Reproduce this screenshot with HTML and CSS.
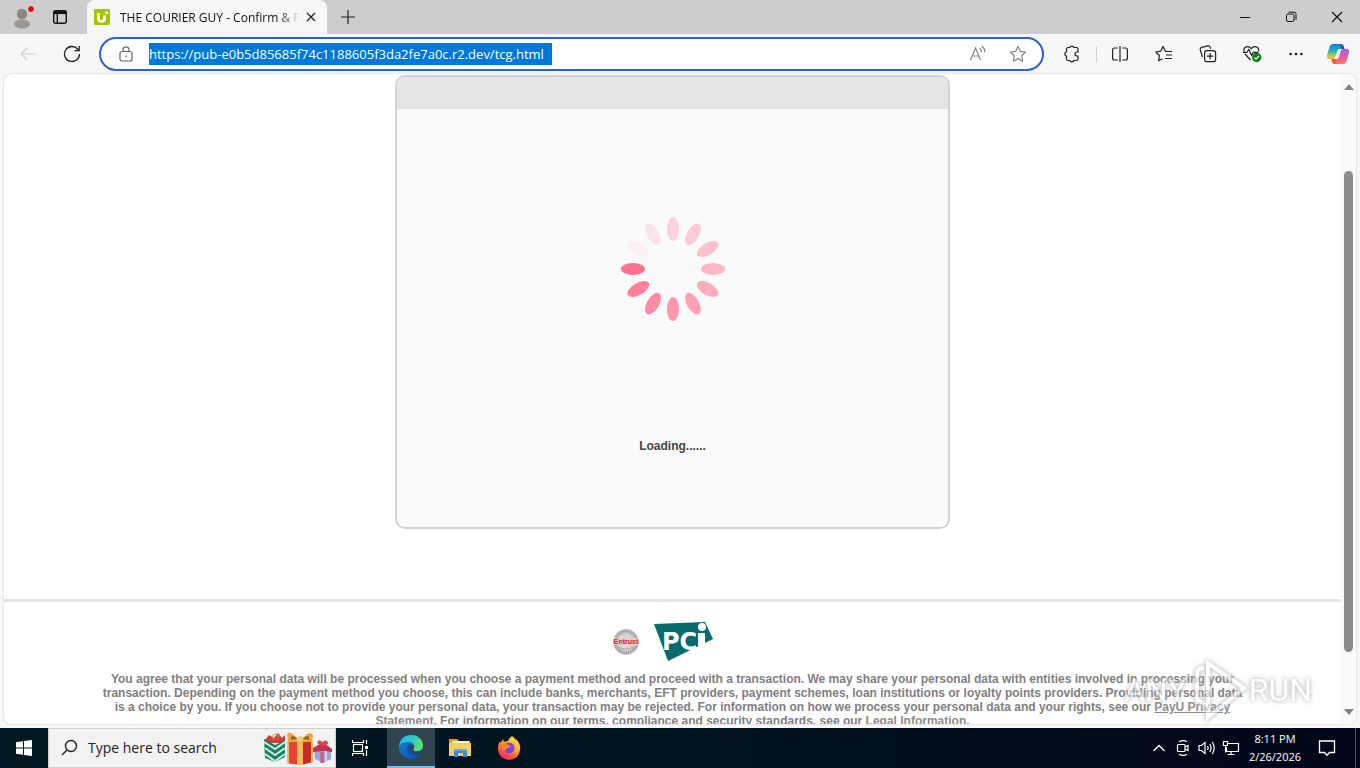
FILE: index.html
```html
<!DOCTYPE html>
<html lang="en">
<head>
<meta charset="utf-8">
<title>THE COURIER GUY - Confirm &amp; Pay</title>
<link rel="stylesheet" href="styles.css">
</head>
<body>
<div class="desktop">
  <header class="tabstrip">
    <button class="profile" aria-label="Profile">
      <svg width="24" height="24" viewBox="0 0 24 24"><circle cx="11" cy="9" r="5.200" fill="#8a8684"/><ellipse cx="11" cy="19" rx="8" ry="4.500" fill="#9a9694"/><circle cx="20" cy="4" r="3.500" fill="#d80c1c" stroke="#e6e6e6"/></svg>
    </button>
    <button class="tab-actions" aria-label="Tab actions">
      <svg width="16" height="16" viewBox="0 0 16 16" fill="none" stroke="#111" stroke-width="1.4"><rect x="1.700" y="1.700" width="12.600" height="12.600" rx="2"/><path d="M1.700 3.600h12.600" stroke-width="3"/><path d="M5.300 5v9"/></svg>
    </button>
    <div class="tab">
      <svg class="favicon" width="16" height="16" viewBox="0 0 16 16"><rect width="16" height="16" rx="1" fill="#a6c307"/><path d="M4.500 4v5.500q0 3 3 3t3-3V6.500" fill="none" stroke="#fff" stroke-width="2.700"/><path d="M11.500 2.500h2.500v2.500h-2.500z" fill="#fff"/></svg>
      <span class="tab-title">THE COURIER GUY - Confirm &amp; Pay</span>
      <button class="tab-close" aria-label="Close tab"><svg width="10" height="10" viewBox="0 0 10 10" stroke="#222" stroke-width="1.300"><path d="M1 1l8 8M9 1l-8 8"/></svg></button>
    </div>
    <button class="new-tab" aria-label="New tab"><svg width="14" height="14" viewBox="0 0 14 14" stroke="#222" stroke-width="1.200"><path d="M7 0v14M0 7h14"/></svg></button>
    <div class="window-controls">
      <button aria-label="Minimize"><svg width="12" height="12" viewBox="0 0 12 12" stroke="#111"><path d="M1 6.500h10"/></svg></button>
      <button aria-label="Restore"><svg width="12" height="12" viewBox="0 0 12 12" stroke="#111" fill="none"><rect x="1.500" y="3" width="7.500" height="7.500" rx="1.500"/><path d="M3.500 1.200h5.500q2 0 2 2v5.500"/></svg></button>
      <button aria-label="Close"><svg width="12" height="12" viewBox="0 0 12 12" stroke="#111" stroke-width="1.200"><path d="M1 1l10 10M11 1L1 11"/></svg></button>
    </div>
  </header>

  <nav class="toolbar">
    <button class="tool back" aria-label="Back"><svg width="18" height="18" viewBox="0 0 18 18" fill="none" stroke="#cfcfcf" stroke-width="1.200"><path d="M17 9H2M8.500 2.500L2 9l6.500 6.500"/></svg></button>
    <button class="tool" aria-label="Refresh"><svg width="18" height="18" viewBox="0 0 18 18" fill="none" stroke="#222" stroke-width="1.300"><path d="M16.500 9A7.500 7.500 0 1 1 14.600 4L16 5.500M16.200 1v4.700h-4.700"/></svg></button>
    <div class="address">
      <svg class="lock" width="14" height="16" viewBox="0 0 14 16" fill="none" stroke="#666" stroke-width="1.200"><rect x="1" y="5.500" width="12" height="9.500" rx="2"/><path d="M4 5.500V3.800a3 3 0 0 1 6 0v1.700"/><circle cx="7" cy="10.300" r=".8" fill="#555" stroke="none"/></svg>
      <input class="url" type="text" aria-label="Address" value="https://pub-e0b5d85685f74c1188605f3da2fe7a0c.r2.dev/tcg.html" spellcheck="false">
      <span class="spacer"></span>
      <button class="tool" aria-label="Read aloud"><svg width="18" height="18" viewBox="0 0 18 18" fill="none" stroke="#858585" stroke-width="1.200"><path d="M1.500 15L6.500 3l5 12M3.300 11h6.400M10.500 3q2 1.500 2 4M12.800 1.200q3.200 2.200 3.200 6"/></svg></button>
      <button class="tool" aria-label="Add to favorites"><svg width="18" height="18" viewBox="0 0 18 18" fill="none" stroke="#858585" stroke-width="1.200" stroke-linejoin="round"><path d="M9 1.500l2.300 4.900 5.300.7-3.900 3.700 1 5.400L9 13.600l-4.700 2.600 1-5.400L1.400 7.100l5.300-.7z"/></svg></button>
    </div>
    <button class="tool extensions" aria-label="Extensions"><svg width="18" height="18" viewBox="0 0 18 18" fill="none" stroke="#222" stroke-width="1.200" stroke-linejoin="round"><path d="M5 2.500h1.800a2.100 2.100 0 0 1 4 0h2.700q1.500 0 1.500 1.500v3h-1a2 2 0 0 0 0 4h1v3q0 1.500-1.500 1.500h-2.700a2.100 2.100 0 0 1-4 0H5q-1.500 0-1.500-1.500V11.200a2.200 2.200 0 0 1 0-4.300V4q0-1.500 1.500-1.500z"/></svg></button>
    <span class="divider"></span>
    <button class="tool wide" aria-label="Split screen"><svg width="18" height="18" viewBox="0 0 18 18" fill="none" stroke="#222" stroke-width="1.200"><path d="M9 1v16M6.800 3H3.500Q1.600 3 1.600 5v8q0 2 1.900 2h3.300M11.200 3h3.300q1.900 0 1.900 2v8q0 2-1.900 2h-3.300"/></svg></button>
    <button class="tool wide" aria-label="Favorites"><svg width="18" height="18" viewBox="0 0 18 18" fill="none" stroke="#222" stroke-width="1.200" stroke-linejoin="round"><path d="M17 6.500h-6.500L8 1.500 5.700 6.200.8 7l3.600 3.500-.8 5.300 3.900-2.100M11 10h6M10 13.500h7"/></svg></button>
    <button class="tool wide" aria-label="Collections"><svg width="18" height="18" viewBox="0 0 18 18" fill="none" stroke="#222" stroke-width="1.200"><rect x="5.600" y="5.600" width="11" height="11" rx="2.200"/><path d="M11.100 8v6.200M8 11.100h6.200M3.500 12L1.300 5q-.5-2 1.300-2.600l6.200-1.500q2-.4 2.500 1.500l.4 1.300"/></svg></button>
    <button class="tool wide" aria-label="Browser essentials"><svg width="20" height="18" viewBox="0 0 20 18" fill="none" stroke="#222" stroke-width="1.200" stroke-linejoin="round"><path d="M3 9L8.500 15M2 6.500C1 1.500 6.500 0 9.200 3.700 12 0 17.500 1.500 16.500 6.500M1 7.300h4l1.800-3 2.800 6.300 1.700-3.300h5"/><circle cx="14.700" cy="12.500" r="4.700" fill="#118018" stroke="none"/><path d="M12.500 12.600l1.500 1.500 3-3.200" stroke="#fff"/></svg></button>
    <button class="tool wide" aria-label="Settings and more"><svg width="16" height="16" viewBox="0 0 16 16" fill="#222"><circle cx="2.500" cy="8" r="1.300"/><circle cx="8" cy="8" r="1.300"/><circle cx="13.500" cy="8" r="1.300"/></svg></button>
    <button class="tool copilot" aria-label="Copilot"><svg width="24" height="22" viewBox="0 0 24 22"><defs><linearGradient id="cpA" x1="0" y1="0" x2="0" y2="1"><stop offset="0" stop-color="#137de2"/><stop offset=".5" stop-color="#27b6b0"/><stop offset=".8" stop-color="#c6cf3c"/><stop offset="1" stop-color="#f6b52b"/></linearGradient><linearGradient id="cpB" x1="0" y1="0" x2="0" y2="1"><stop offset="0" stop-color="#9866e8"/><stop offset=".5" stop-color="#e05ba8"/><stop offset="1" stop-color="#fa7b52"/></linearGradient></defs><path d="M7 1h8q2 0 2.700 2l.8 3H14q-2 0-2.600 2l-2 6q-.7 2-2.700 2H3.500Q0 16 1 12L3.500 4Q4.500 1 7 1z" fill="url(#cpA)"/><path d="M14.500 1q3 0 4 5H15z" fill="#2256ca"/><path d="M17 21H9q-2 0-2.700-2l-.8-3H10q2 0 2.600-2l2-6q.7-2 2.700-2h3.200q3.500 0 2.500 4l-2.500 8q-1 3-3.500 3z" fill="url(#cpB)"/><path d="M5.500 16H10q-1 5 0 5H9q-3 0-3.500-5z" fill="#f05c37"/><path d="M10.400 11l1.500-4q.3-1 1.500-1h2l-2 6q-.7 4-3 4H8q1-1 1.400-2z" fill="#f5f5f7"/></svg></button>
  </nav>

  <div class="pane">
    <main class="page">
      <section class="card">
        <div class="card-head"></div>
        <div class="card-body">
          <svg class="spinner" width="104" height="104" viewBox="-52 -52 104 104" fill="#ff7190">
            <ellipse cx="0" cy="-40" rx="6" ry="12" fill="#fbd5de"/>
            <ellipse cx="0" cy="-40" rx="6" ry="12" fill="#fccbd7" transform="rotate(30)"/>
            <ellipse cx="0" cy="-40" rx="6" ry="12" fill="#fcc1ce" transform="rotate(60)"/>
            <ellipse cx="0" cy="-40" rx="6" ry="12" fill="#fdb7c6" transform="rotate(90)"/>
            <ellipse cx="0" cy="-40" rx="6" ry="12" fill="#fdacbe" transform="rotate(120)"/>
            <ellipse cx="0" cy="-40" rx="6" ry="12" fill="#fea1b6" transform="rotate(150)"/>
            <ellipse cx="0" cy="-40" rx="6" ry="12" fill="#fe96ad" transform="rotate(180)"/>
            <ellipse cx="0" cy="-40" rx="6" ry="12" fill="#fe8ba4" transform="rotate(210)"/>
            <ellipse cx="0" cy="-40" rx="6" ry="12" fill="#ff809b" transform="rotate(240)"/>
            <ellipse cx="0" cy="-40" rx="6" ry="12" fill="#ff7190" transform="rotate(270)"/>
            <ellipse cx="0" cy="-40" rx="6" ry="12" fill="#faf0f3" transform="rotate(300)"/>
            <ellipse cx="0" cy="-40" rx="6" ry="12" fill="#fbe3e9" transform="rotate(330)"/>
          </svg>
          <p class="loading">Loading......</p>
        </div>
      </section>
      <footer class="legal">
        <div class="badges">
          <svg width="28" height="28" viewBox="0 0 28 28"><defs><radialGradient id="seal"><stop offset="0" stop-color="#e4e4e4"/><stop offset=".65" stop-color="#d0d0d0"/><stop offset="1" stop-color="#b0b0b0"/></radialGradient></defs><circle cx="14" cy="14" r="12.500" fill="url(#seal)" stroke="#bcbcbc"/><circle cx="14" cy="14" r="10.500" fill="none" stroke="#959595" stroke-width="2" stroke-dasharray="1 1.200"/><path d="M6 19q8 4 16 0" fill="none" stroke="#aaa"/><rect x="2" y="10" width="24" height="7" fill="#e3cdcd"/><text class="seal-text" x="14" y="16" text-anchor="middle">Entrust</text></svg>
          <svg width="60" height="42" viewBox="0 0 60 42"><path d="M0 3L51 1l8 17-45 22z" fill="#066b6b"/><text class="pci-text" x="8" y="29">PC</text><path d="M44 12h7v17h-7z" fill="#fff"/><circle cx="48" cy="6" r="4" fill="#fff"/></svg>
        </div>
        <p>You agree that your personal data will be processed when you choose a payment method and proceed with a transaction. We may share your personal data with entities involved in processing your transaction. Depending on the payment method you choose, this can include banks, merchants, EFT providers, payment schemes, loan institutions or loyalty points providers. Providing personal data is a choice by you. If you choose not to provide your personal data, your transaction may be rejected. For information on how we process your personal data and your rights, see our <a href="#">PayU Privacy Statement</a>. For information on our terms, compliance and security standards, see our <a href="#">Legal Information</a>.</p>
      </footer>
    </main>
    <div class="scrollbar">
      <svg width="10" height="6" viewBox="0 0 10 6"><path d="M0 6L5 0l5 6z" fill="#858585"/></svg>
      <div class="track"><div class="thumb"></div></div>
      <svg width="10" height="6" viewBox="0 0 10 6"><path d="M0 0l5 6 5-6z" fill="#858585"/></svg>
    </div>
  </div>

  <footer class="taskbar">
    <button class="task start" aria-label="Start"><svg width="16" height="16" viewBox="0 0 16 16" fill="#fff"><path d="M0 2.200l7-1v6.300H0zM8 1l8-1v7.500H8zM0 8.500h7v6.300l-7-1zM8 8.500h8V16l-8-1z"/></svg></button>
    <label class="search">
      <svg width="18" height="18" viewBox="0 0 18 18" fill="none" stroke="#222" stroke-width="1.400"><circle cx="10" cy="7" r="5.500"/><path d="M6 11l-5 5"/></svg>
      <input type="text" placeholder="Type here to search" aria-label="Type here to search">
      <svg class="gifts" width="70" height="34" viewBox="0 0 70 34">
        <path d="M2 9l4-5 5 3 4-5 4 5 3-3v8H2z" fill="#d43a34"/><path d="M10 9q-1-7 3-6t1 6" fill="none" stroke="#b99447"/>
        <path d="M1 8l11 6 10-5v17l-10 5L2 27z" fill="#168069"/><path d="M1 11l11 7 10-7M2 17l10 7 10-7M2 23l10 7 10-7" fill="none" stroke="#d7e9db" stroke-width="2"/>
        <path d="M51 18l9-3 8 4v9l-8 4-8-4z" fill="#9aa5df"/><path d="M50 17l10-6 9 7v3l-9-1-10 1z" fill="#c3314e"/><path d="M54 12q2-5 5-1 6-4 6 2l-6 2z" fill="#df414f"/><path d="M59 21v11" stroke="#df506a" stroke-width="3"/><path d="M63 20v10" stroke="#c9d5f6" stroke-width="2"/>
        <path d="M24 10h26v21l-12 3-14-2z" fill="#c92b27"/><path d="M24 11h13v22l-13-1z" fill="#e64435"/><path d="M34 10h6v24h-6zM24 10h2v22h-2zM48 10h2v21h-2z" fill="#efb85b"/><path d="M36 9Q27-2 24 3l1 8h11zM38 9q9-11 12-5l-1 7H38z" fill="#e8a944"/><path d="M34 8q-4-5-6-2v3zM40 8q4-5 6-2v3z" fill="#986125"/><circle cx="37" cy="8" r="3" fill="#f5ca78"/>
      </svg>
    </label>
    <button class="task" aria-label="Task view"><svg width="18" height="18" viewBox="0 0 18 18" fill="none" stroke="#fff" stroke-width="1.200"><rect x="1.500" y="5.500" width="9" height="7"/><path d="M.5 1v2.500h11V1M.5 17v-2.500h11V17M14.500 1v4M14.500 11v6"/><path d="M13 7h3v3h-3z" fill="#fff" stroke="none"/></svg></button>
    <button class="task active" aria-label="Microsoft Edge"><svg width="24" height="24" viewBox="0 0 24 24"><defs><linearGradient id="edTop" x1="0" y1=".3" x2="1" y2=".5"><stop offset="0" stop-color="#29b7e8"/><stop offset=".5" stop-color="#2bc7ce"/><stop offset="1" stop-color="#69df55"/></linearGradient><linearGradient id="edLow" x1="0" y1="0" x2=".5" y2="1"><stop offset="0" stop-color="#1789d9"/><stop offset="1" stop-color="#0b5bb5"/></linearGradient></defs><circle cx="12" cy="12" r="12" fill="url(#edLow)"/><path d="M0 11C1 3 7 0 12 0c7 0 12 5 12 10.500 0 4-3 6-6 6-3.500 0-4.500-1.500-3.500-2.700 2-3 0-6.300-4-6.800C5.500 6.500 1.500 8 0 11z" fill="url(#edTop)"/><path d="M8 14c0-3 2-5 3-5 3 0 4.500 2.500 3.500 4.500-1 1.500 0 3 3.500 3 2 0 4-.7 5-2l.5 2.500-1.500 2.500C16 22.500 8 20.500 8 14z" fill="#0f4c9c"/><path d="M10.500 12c1-2 3-2.500 4-1 .5 1 .3 2-.5 3-1 1.500 0 2.600 4 2.800 2.500.2 5-1 5.500-1.800v3c-6 3-13-.5-13-6z" fill="#30454f"/></svg></button>
    <button class="task" aria-label="File Explorer"><svg width="22" height="20" viewBox="0 0 22 20"><path d="M0 1h8l2 2h11v6H0z" fill="#e79a24"/><path d="M3 3h17v4H3z" fill="#f7f2d4"/><path d="M0 5h22v13H0z" fill="#f9cf5c"/><path d="M5 11h13v8h-4v-4H9v4H5z" fill="#3b91ce"/><path d="M5 11h13v2H5z" fill="#5baee0"/></svg></button>
    <button class="task" aria-label="Firefox"><svg width="24" height="24" viewBox="0 0 24 24"><defs><linearGradient id="fx" x1=".8" y1="0" x2=".2" y2="1"><stop offset="0" stop-color="#fff044"/><stop offset=".45" stop-color="#ff9b29"/><stop offset=".8" stop-color="#ff443f"/><stop offset="1" stop-color="#e31587"/></linearGradient></defs><path d="M15 0q4 3 4 5V3q5 5 4 11-1 9-11 10Q2 23 1 14q-.5-5 2-9l.5 2L6 3l1 3q2-1 4-1 1-3 4-5z" fill="url(#fx)"/><circle cx="12" cy="12" r="5.500" fill="#7846dc"/><path d="M5 8q4-2 6 1l3 1q-1 2-4 2-2 1-1 3-4-1-4-7z" fill="#ff8a24"/></svg></button>
    <span class="spacer"></span>
    <div class="tray">
      <button aria-label="Show hidden icons"><svg width="14" height="14" viewBox="0 0 14 14" fill="none" stroke="#fff" stroke-width="1.300"><path d="M1.500 10L7 4.500l5.500 5.500"/></svg></button>
      <button aria-label="Meet now"><svg width="14" height="18" viewBox="0 0 14 18" fill="none" stroke="#fff" stroke-width="1.200"><rect x="1.500" y="5.500" width="7.500" height="7" rx="1"/><path d="M9 8l3-1.500v5L9 10M3 2.800q4-2.500 8 0M3 15.200q4 2.500 8 0"/></svg></button>
      <button aria-label="Volume"><svg width="18" height="16" viewBox="0 0 18 16" fill="none" stroke="#fff" stroke-width="1.200"><path d="M1 5.500h2.500L7 2.500v11l-3.500-3H1zM9.500 6q1.200 2 0 4M11.800 4q2.600 4 0 8M14.200 2q4 6 0 12"/></svg></button>
      <button aria-label="Network"><svg width="18" height="16" viewBox="0 0 18 16" fill="none" stroke="#fff" stroke-width="1.200"><path d="M6 3.500h10.500v8H4.500V7M9 11.500v3M5.500 14.500h7M1.500 1.500h4v4h-4zM3.500 5.500v7"/></svg></button>
    </div>
    <div class="clock"><time>8:11 PM</time><time datetime="2026-02-26">2/26/2026</time></div>
    <button class="notify" aria-label="Notifications"><svg width="18" height="18" viewBox="0 0 18 18" fill="none" stroke="#fff" stroke-width="1.300"><path d="M1.500 2h15v11.500h-5L9 16.300l-2.500-2.800h-5z"/></svg></button>
    <span class="peek"></span>
  </footer>

  <div class="watermark" aria-hidden="true">
    <span>ANY</span>
    <svg width="62" height="64" viewBox="0 0 62 64" fill="none" stroke="#fff" stroke-width="4"><path d="M21 5v54l36-29z"/><path d="M17 10q-7 0-7 6v25l11 8"/></svg>
    <span>RUN</span>
  </div>
</div>
</body>
</html>
```
FILE: styles.css
```css
* { box-sizing: border-box; }

body {
  margin: 0;
  font-family: "Open Sans", "Noto Sans", sans-serif;
  font-size: 12px;
  color: #111;
}

button {
  display: flex;
  align-items: center;
  justify-content: center;
  flex: none;
  margin: 0;
  padding: 0;
  border: 0;
  background: none;
}

svg { display: block; flex: none; }
.spacer { flex: 1; }

.desktop {
  position: relative;
  display: flex;
  flex-direction: column;
  height: 100vh;
  overflow: hidden;
  background: #f7f7f7;
}

/* Tab strip */
.tabstrip {
  display: flex;
  flex: none;
  height: 34px;
  padding-left: 10px;
  background: #cdcdcd;
}
.profile { width: 26px; }
.tab-actions { width: 48px; }
.tab {
  display: flex;
  align-items: center;
  width: 240px;
  margin-left: 3px;
  padding: 0 11px 0 7px;
  border-radius: 8px 8px 0 0;
  background: #f7f7f7;
}
.tab-title {
  flex: 1;
  min-width: 0;
  margin: 0 6px 0 10px;
  overflow: hidden;
  white-space: nowrap;
  mask-image: linear-gradient(90deg, #000 88%, transparent);
}
.tab-close { width: 10px; }
.new-tab { width: 42px; }
.window-controls { display: flex; margin-left: auto; }
.window-controls button { width: 46px; }

/* Toolbar */
.toolbar {
  display: flex;
  flex: none;
  align-items: center;
  height: 40px;
  padding: 0 2px 0 8px;
}
.tool { width: 40px; height: 32px; }
.tool.back { margin-right: 4px; }
.tool.wide { width: 44px; }
.tool.extensions { margin-left: 8px; }
.tool.copilot { width: 40px; }
.divider { width: 1px; height: 16px; margin: 0 1px 0 4px; background: #cfcfcf; }
.address {
  display: flex;
  flex: 1;
  align-items: center;
  height: 34px;
  margin-left: 7px;
  padding: 0 4px 0 18px;
  border: 2px solid #2e62c9;
  border-radius: 17px;
  background: #fff;
}
.url {
  width: 403px;
  height: 22px;
  margin-left: 16px;
  padding: 0;
  border: 0;
  background: #0078d7;
  color: #fff;
  font: 13px/22px "Open Sans", "Noto Sans", sans-serif;
}

/* Web page */
.pane {
  display: flex;
  flex: 1;
  min-height: 0;
  margin: 0 4px 4px;
  overflow: hidden;
  border-radius: 8px;
  background: #fff;
  box-shadow: 0 0 2px #bdbdbd;
}
.page {
  flex: 1;
  min-width: 0;
  padding-top: 1px;
  overflow: hidden;
  font-family: "Liberation Sans", Arial, sans-serif;
}
.card {
  width: 555px;
  margin: 0 auto;
  overflow: hidden;
  border: 2px solid #d2d2d2;
  border-radius: 10px;
  background: #fafafa;
}
.card-head { height: 32px; background: #e5e5e5; }
.card-body {
  display: flex;
  flex-direction: column;
  align-items: center;
  padding: 108px 0 74px;
}
.loading {
  margin: 118px 0 0;
  color: #444;
  font-size: 12px;
  font-weight: bold;
  line-height: 14px;
}
.legal {
  margin-top: 70px;
  padding-top: 19px;
  border-top: 3px solid #e5e5e5;
}
.legal p {
  max-width: 1150px;
  margin: 9px auto 0;
  color: #808080;
  font-size: 12px;
  font-weight: bold;
  line-height: 14px;
  text-align: center;
}
.legal a { color: #8c8c8c; }
.badges {
  display: flex;
  align-items: center;
  justify-content: center;
  gap: 14px;
  padding-right: 20px;
}
.seal-text { fill: #d81e2c; font: bold 7px "Liberation Sans", Arial, sans-serif; }
.pci-text { fill: #fff; font: bold 24px "DejaVu Sans", sans-serif; }

.scrollbar {
  display: flex;
  flex: none;
  flex-direction: column;
  align-items: center;
  width: 15px;
  padding: 10px 0 9px;
  background: #fafafa;
}
.track { flex: 1; width: 9px; padding: 81px 0 57px; }
.thumb { height: 100%; border-radius: 5px; background: #8b8b8b; }

/* Taskbar */
.taskbar {
  display: flex;
  flex: none;
  height: 40px;
  background: linear-gradient(90deg, #001920, #00141f 50%, #020519);
}
.task { width: 49px; }
.task.start { width: 48px; }
.task.active {
  width: 48px;
  margin-left: 2px;
  border-bottom: 2px solid #76b9ed;
  background: #30454f;
}
.search {
  display: flex;
  align-items: center;
  width: 288px;
  padding: 0 2px 0 12px;
  border: 1px solid #cfcfcf;
  background: #f2f2f2;
}
.search input {
  flex: 1;
  min-width: 0;
  margin-left: 9px;
  padding: 0;
  border: 0;
  background: none;
  font: 14px/20px "Open Sans", "Noto Sans", sans-serif;
}
.search input::placeholder { color: #222; opacity: 1; }
.tray { display: flex; }
.tray button { width: 24px; }
.clock {
  display: flex;
  flex-direction: column;
  align-items: center;
  justify-content: center;
  width: 64px;
  color: #fff;
  font-size: 11px;
  line-height: 18px;
}
.notify { width: 40px; }
.peek { width: 5px; margin-left: 8px; border-left: 1px solid #4d5264; }

/* Recorder overlay */
.watermark {
  position: absolute;
  right: 48px;
  bottom: 46px;
  display: flex;
  align-items: center;
  color: #fff;
  font: 32px/40px Roboto, sans-serif;
  opacity: 0.6;
  filter: drop-shadow(0 0 2px #999) drop-shadow(0 0 2px #ccc);
  pointer-events: none;
}
```
